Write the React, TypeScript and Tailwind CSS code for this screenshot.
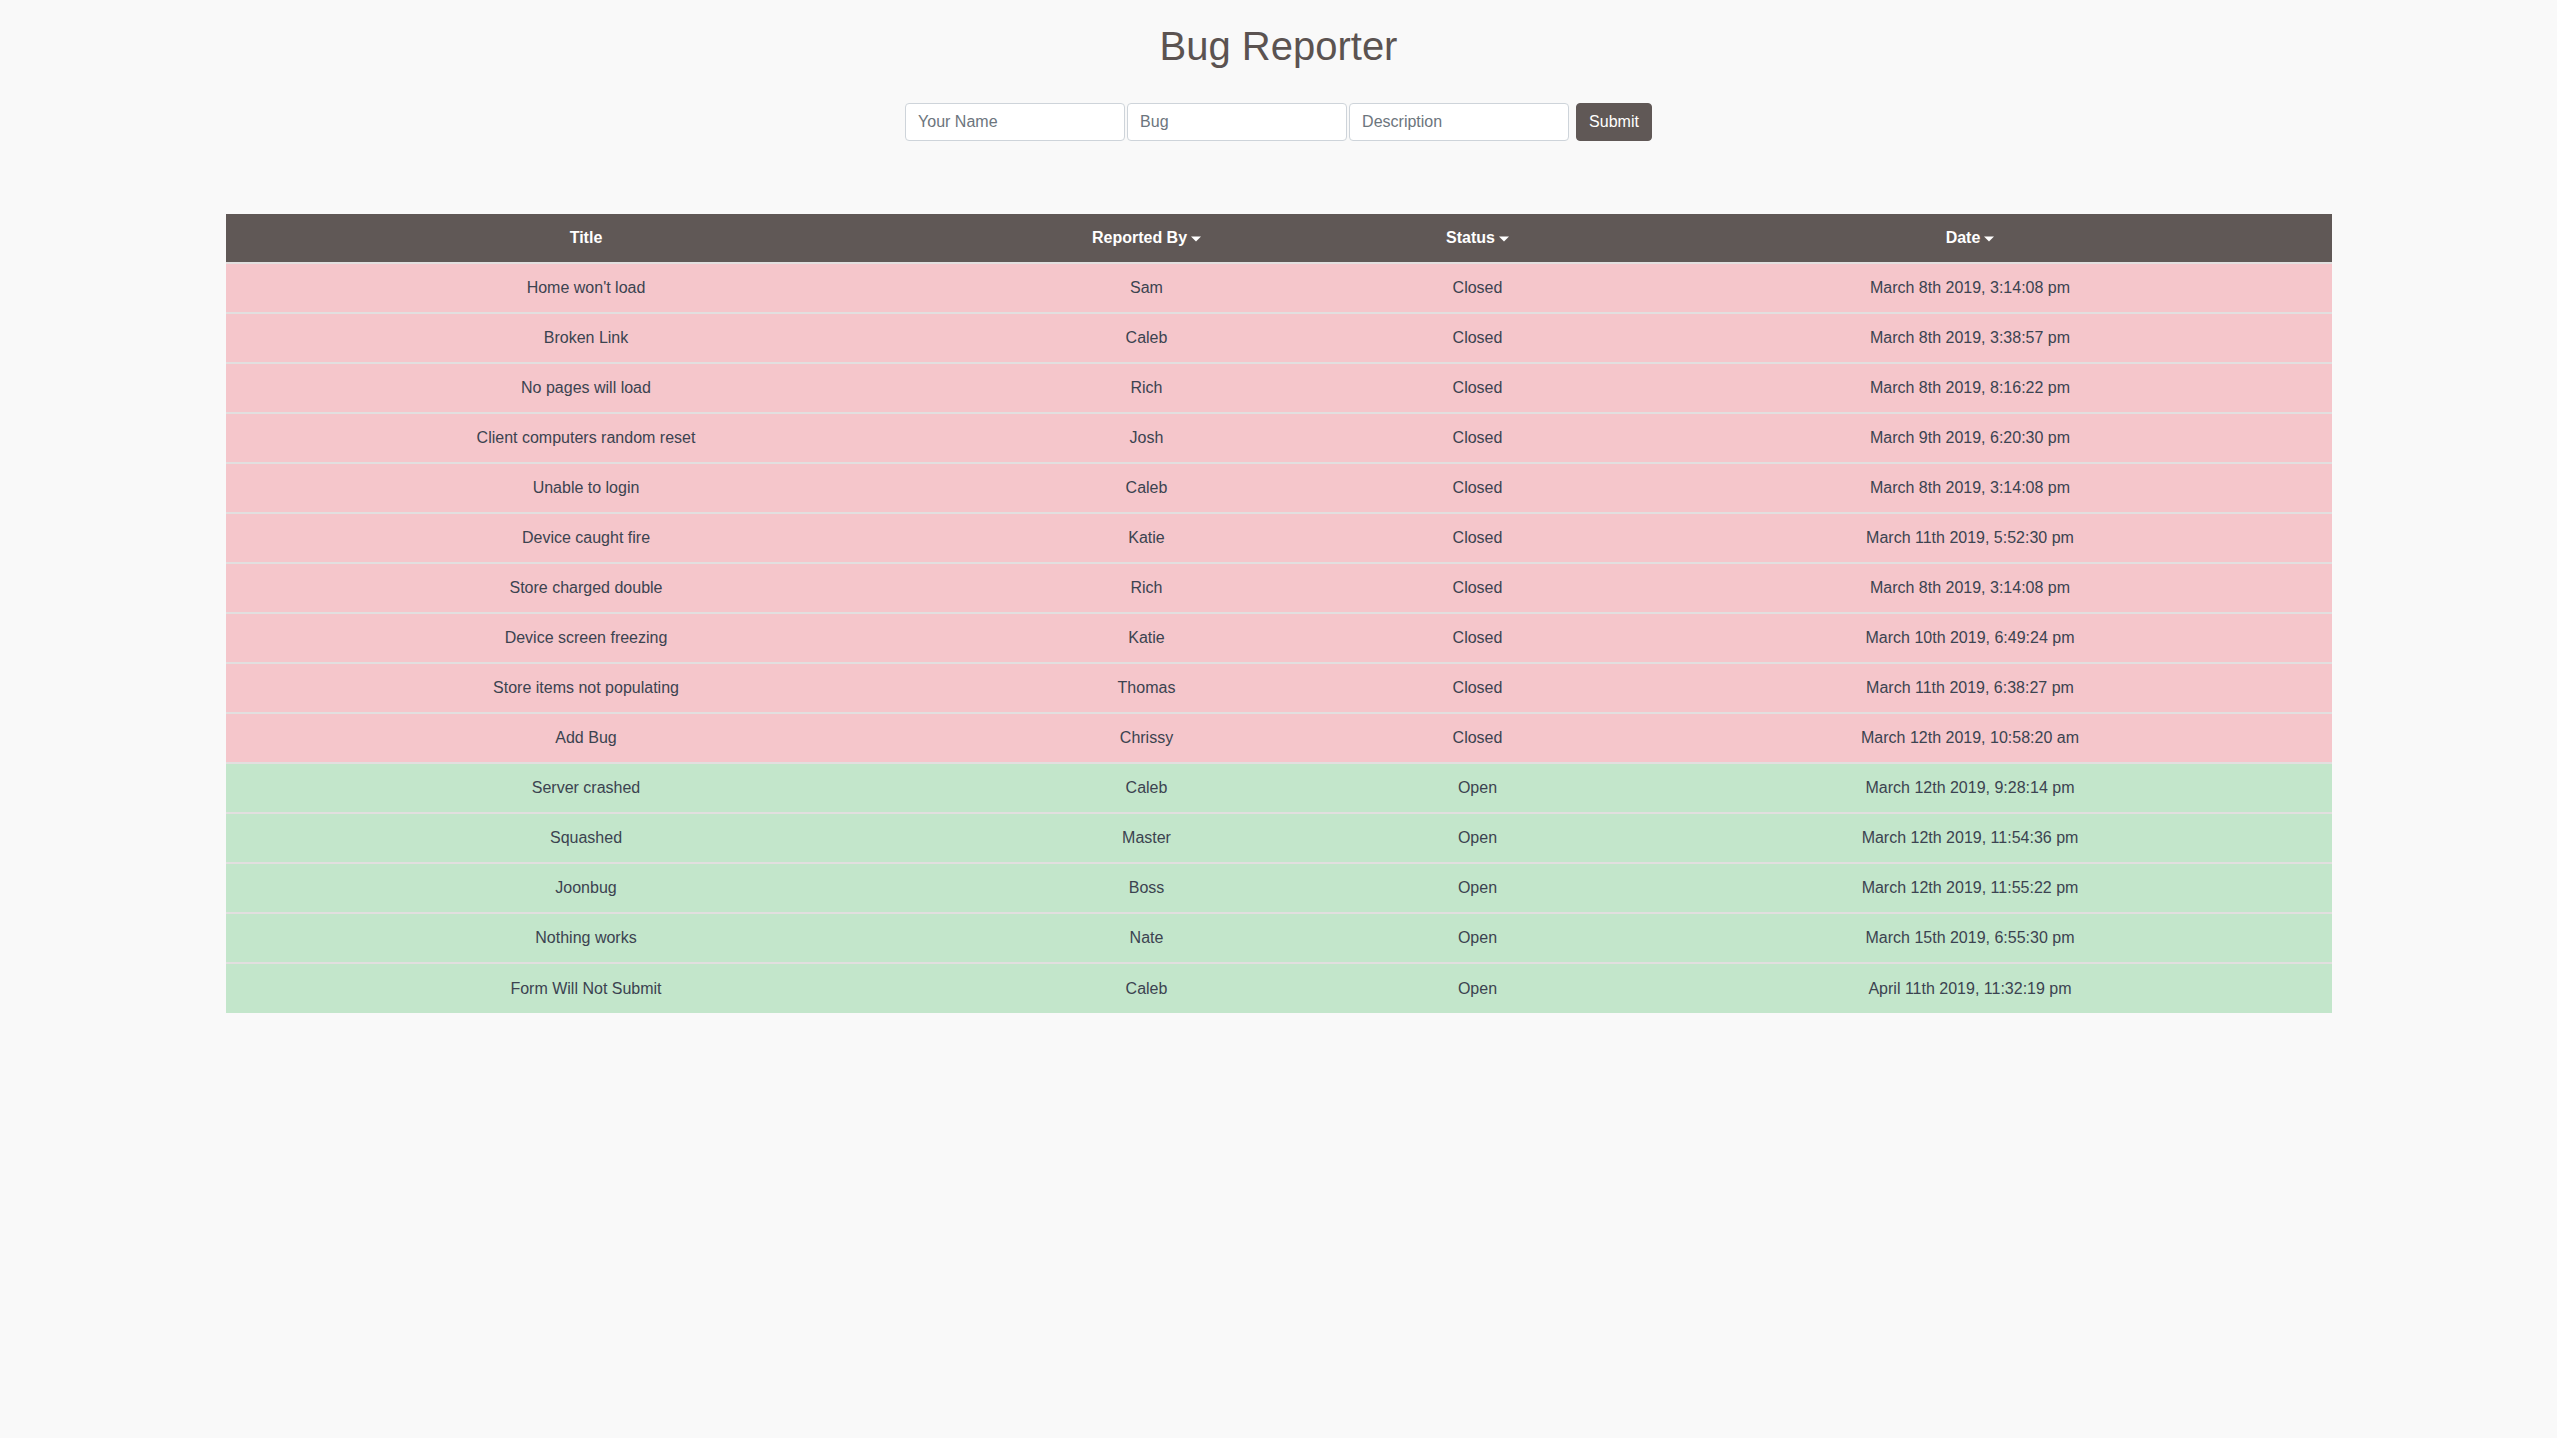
const bugs = [
  { title: "Home won't load", by: "Sam", status: "Closed", date: "March 8th 2019, 3:14:08 pm" },
  { title: "Broken Link", by: "Caleb", status: "Closed", date: "March 8th 2019, 3:38:57 pm" },
  { title: "No pages will load", by: "Rich", status: "Closed", date: "March 8th 2019, 8:16:22 pm" },
  { title: "Client computers random reset", by: "Josh", status: "Closed", date: "March 9th 2019, 6:20:30 pm" },
  { title: "Unable to login", by: "Caleb", status: "Closed", date: "March 8th 2019, 3:14:08 pm" },
  { title: "Device caught fire", by: "Katie", status: "Closed", date: "March 11th 2019, 5:52:30 pm" },
  { title: "Store charged double", by: "Rich", status: "Closed", date: "March 8th 2019, 3:14:08 pm" },
  { title: "Device screen freezing", by: "Katie", status: "Closed", date: "March 10th 2019, 6:49:24 pm" },
  { title: "Store items not populating", by: "Thomas", status: "Closed", date: "March 11th 2019, 6:38:27 pm" },
  { title: "Add Bug", by: "Chrissy", status: "Closed", date: "March 12th 2019, 10:58:20 am" },
  { title: "Server crashed", by: "Caleb", status: "Open", date: "March 12th 2019, 9:28:14 pm" },
  { title: "Squashed", by: "Master", status: "Open", date: "March 12th 2019, 11:54:36 pm" },
  { title: "Joonbug", by: "Boss", status: "Open", date: "March 12th 2019, 11:55:22 pm" },
  { title: "Nothing works", by: "Nate", status: "Open", date: "March 15th 2019, 6:55:30 pm" },
  { title: "Form Will Not Submit", by: "Caleb", status: "Open", date: "April 11th 2019, 11:32:19 pm" },
];

function Caret() {
  return (
    <svg width="10" height="6" viewBox="0 0 10 6" className="ml-1 inline-block">
      <path d="M0 0.5 L10 0.5 L5 5.5 Z" fill="#fff" />
    </svg>
  );
}

export default function App() {
  return (
    <div
      className="min-h-screen bg-[#f9f9f9] pt-[22px]"
      style={{ fontFamily: '"Liberation Sans", Arial, sans-serif' }}
    >
      {/* HEADER */}
      <h1 className="text-center text-[40px] leading-[48px] text-[#5b5351]">
        Bug Reporter
      </h1>

      {/* FORM */}
      <div className="mt-[33px] flex justify-center">
        <div className="flex items-center gap-[2px]">
          <input
            placeholder="Your Name"
            className="h-[38px] w-[220px] rounded border border-[#ced4da] bg-white px-3 text-base text-[#495057] placeholder:text-[#6c757d] outline-none"
          />
          <input
            placeholder="Bug"
            className="h-[38px] w-[220px] rounded border border-[#ced4da] bg-white px-3 text-base text-[#495057] placeholder:text-[#6c757d] outline-none"
          />
          <input
            placeholder="Description"
            className="h-[38px] w-[220px] rounded border border-[#ced4da] bg-white px-3 text-base text-[#495057] placeholder:text-[#6c757d] outline-none"
          />
        </div>
        <button className="ml-[7px] h-[38px] rounded border border-[#605856] bg-[#605856] px-3 text-base text-white">
          Submit
        </button>
      </div>

      {/* TABLE */}
      <table className="mx-auto mt-[73px] w-[2106px] table-fixed border-collapse text-center text-base">
        <thead>
          <tr className="h-[49px] bg-[#605856] font-bold text-white">
            <th className="w-[721px] font-bold">Title</th>
            <th className="w-[400px] font-bold">
              Reported By
              <Caret />
            </th>
            <th className="w-[262px] font-bold">
              Status
              <Caret />
            </th>
            <th className="w-[723px] font-bold">
              Date
              <Caret />
            </th>
          </tr>
        </thead>
        <tbody>
          {bugs.map((b, i) => (
            <tr
              key={i}
              className={`h-[50px] border-t-2 border-[#e2dfdf] text-[#3b4350] ${
                b.status === "Open" ? "bg-[#c3e6cb]" : "bg-[#f5c6cb]"
              }`}
            >
              <td>{b.title}</td>
              <td>{b.by}</td>
              <td>{b.status}</td>
              <td>{b.date}</td>
            </tr>
          ))}
        </tbody>
      </table>
    </div>
  );
}
